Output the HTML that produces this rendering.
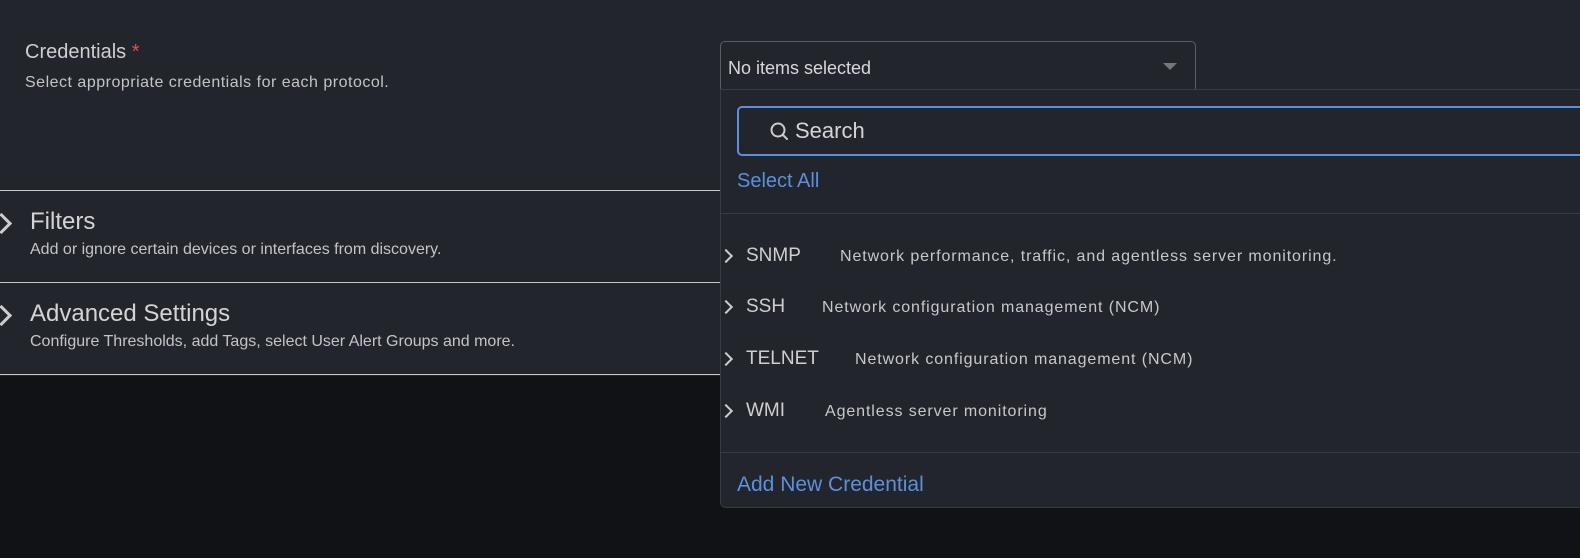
<!DOCTYPE html>
<html><head><style>
*{margin:0;padding:0;box-sizing:border-box}
body{width:1580px;height:558px;overflow:hidden;background:#111216;font-family:"Liberation Sans",sans-serif;position:relative;color:#d0d0d0}
.top{position:absolute;left:0;top:0;width:1580px;height:376px;background:#22252c}
.a{position:absolute;white-space:nowrap}
.hl{position:absolute;left:0;width:720px;height:1px;background:#c8c8c8}
.chev{position:absolute;width:15px;height:15px;border-right:3px solid #ccc;border-top:3px solid #ccc;transform:rotate(45deg)}
.sc{position:absolute;width:10px;height:10px;border-right:2px solid #ccc;border-top:2px solid #ccc;transform:rotate(45deg)}
.d{font-size:16px;color:#c8c8c8;letter-spacing:0.9px}
</style></head><body>
<div class="top"></div>
<div class="a" style="left:25px;top:41px;font-size:20px;color:#cfcfcf">Credentials <span style="color:#e0533f">*</span></div>
<div class="a" style="left:25px;top:74px;font-size:16px;color:#c4c4c4;letter-spacing:0.5px">Select appropriate credentials for each protocol.</div>
<div class="hl" style="top:190px"></div>
<div class="chev" style="left:-6px;top:216px"></div>
<div class="a" style="left:30px;top:208px;font-size:24px;color:#d4d4d4">Filters</div>
<div class="a" style="left:30px;top:241px;font-size:16px;color:#c4c4c4">Add or ignore certain devices or interfaces from discovery.</div>
<div class="hl" style="top:282px"></div>
<div class="chev" style="left:-6px;top:308px"></div>
<div class="a" style="left:30px;top:300px;font-size:24px;color:#d4d4d4">Advanced Settings</div>
<div class="a" style="left:30px;top:333px;font-size:16px;color:#c4c4c4">Configure Thresholds, add Tags, select User Alert Groups and more.</div>
<div class="hl" style="top:374px"></div>

<div style="position:absolute;left:720px;top:41px;width:476px;height:52px;border:1px solid #5a5d63;border-radius:5px;background:#22252c"></div>
<div class="a" style="left:728px;top:58px;font-size:18px;color:#d8d8d8">No items selected</div>
<div style="position:absolute;left:1163px;top:63px;width:0;height:0;border-left:7px solid transparent;border-right:7px solid transparent;border-top:7px solid #777"></div>

<div style="position:absolute;left:720px;top:89px;width:880px;height:419px;background:#22252c;border:1px solid #383b42;border-radius:0 0 6px 6px"></div>
<div style="position:absolute;left:737px;top:106px;width:860px;height:50px;border:2px solid #5b8fe0;border-radius:5px"></div>
<svg style="position:absolute;left:769px;top:121px" width="22" height="22" viewBox="0 0 22 22"><circle cx="9" cy="9" r="6.5" fill="none" stroke="#ccc" stroke-width="2"/><path d="M14 14l4 4" stroke="#ccc" stroke-width="2" stroke-linecap="round"/></svg>
<div class="a" style="left:795px;top:118px;font-size:22px;color:#d4d4d4">Search</div>
<div class="a" style="left:737px;top:170px;font-size:20px;color:#5b8fe0">Select All</div>
<div style="position:absolute;left:721px;top:213px;width:860px;height:1px;background:#383b42"></div>

<div class="sc" style="left:721px;top:251px"></div>
<div class="a" style="left:746px;top:245px;font-size:19px;color:#cfcfcf">SNMP</div>
<div class="a d" style="left:840px;top:248px">Network performance, traffic, and agentless server monitoring.</div>
<div class="sc" style="left:721px;top:302px"></div>
<div class="a" style="left:746px;top:296px;font-size:19px;color:#cfcfcf">SSH</div>
<div class="a d" style="left:822px;top:299px">Network configuration management (NCM)</div>
<div class="sc" style="left:721px;top:354px"></div>
<div class="a" style="left:746px;top:348px;font-size:19px;color:#cfcfcf">TELNET</div>
<div class="a d" style="left:855px;top:351px">Network configuration management (NCM)</div>
<div class="sc" style="left:721px;top:406px"></div>
<div class="a" style="left:746px;top:400px;font-size:19px;color:#cfcfcf">WMI</div>
<div class="a d" style="left:825px;top:403px">Agentless server monitoring</div>
<div style="position:absolute;left:721px;top:452px;width:860px;height:1px;background:#383b42"></div>
<div class="a" style="left:737px;top:473px;font-size:21px;color:#5b8fe0">Add New Credential</div>
</body></html>
